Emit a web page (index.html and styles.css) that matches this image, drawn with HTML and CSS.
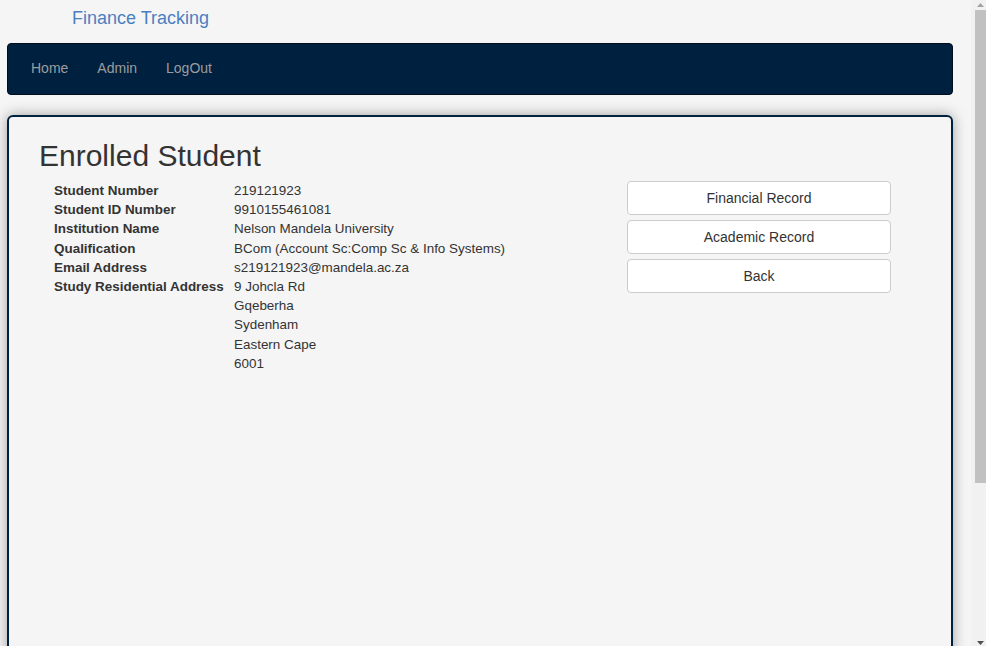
FILE: index.html
```html
<!DOCTYPE html>
<html>
<head>
<meta charset="utf-8">
<link rel="stylesheet" href="styles.css">
</head>
<body>
<div class="wrap">
  <div class="brand">Finance Tracking</div>
  <nav class="navbar">
    <a class="nav-link" href="#">Home</a>
    <a class="nav-link" href="#">Admin</a>
    <a class="nav-link" href="#">LogOut</a>
  </nav>
  <section class="card">
    <div class="main">
      <h1 class="title">Enrolled Student</h1>
      <div class="details">
        <div class="label">Student Number</div><div class="value">219121923</div>
        <div class="label">Student ID Number</div><div class="value">9910155461081</div>
        <div class="label">Institution Name</div><div class="value">Nelson Mandela University</div>
        <div class="label">Qualification</div><div class="value">BCom (Account Sc:Comp Sc &amp; Info Systems)</div>
        <div class="label">Email Address</div><div class="value">s219121923@mandela.ac.za</div>
        <div class="label">Study Residential Address</div>
        <div class="value">9 Johcla Rd<br>Gqeberha<br>Sydenham<br>Eastern Cape<br>6001</div>
      </div>
    </div>
    <div class="actions">
      <button class="btn">Financial Record</button>
      <button class="btn">Academic Record</button>
      <button class="btn">Back</button>
    </div>
  </section>
</div>
<div class="scrollbar" aria-hidden="true">
  <div class="sb-btn">
    <svg width="7" height="4" viewBox="0 0 7 4"><polygon points="3.5,0 7,4 0,4" fill="#a3a3a3"/></svg>
  </div>
  <div class="sb-track"><div class="sb-thumb"></div></div>
  <div class="sb-btn sb-down">
    <svg width="7" height="4" viewBox="0 0 7 4"><polygon points="0,0 7,0 3.5,4" fill="#505050"/></svg>
  </div>
</div>
</body>
</html>
```
FILE: styles.css
```css
html, body {
  margin: 0;
  padding: 0;
  background: #f5f5f5;
  font-family: "Liberation Sans", Arial, sans-serif;
  color: #333;
}
.wrap {
  width: 946px;
  margin-left: 7px;
  padding-bottom: 20px;
}
.brand {
  color: #4b7fc0;
  font-size: 18px;
  line-height: 20px;
  padding: 8px 0 0 65px;
  height: 43px;
  box-sizing: border-box;
}
.navbar {
  height: 52px;
  box-sizing: border-box;
  background: #002040;
  border: 1px solid #000d1c;
  border-radius: 4px;
  display: flex;
  align-items: center;
  padding-left: 23px;
  gap: 29px;
}
.nav-link {
  color: #9d9d9d;
  text-decoration: none;
  font-size: 14px;
  line-height: 20px;
  padding-bottom: 2px;
}
.card {
  box-sizing: border-box;
  margin-top: 20px;
  height: 720px;
  border: 2px solid #002040;
  border-radius: 6px;
  background: #f5f5f5;
  box-shadow: 0 0 14px rgba(0, 0, 0, 0.35);
  display: flex;
  align-items: flex-start;
  padding: 22px 60px 20px 30px;
}
.main {
  flex: 1;
}
.title {
  margin: 0 0 9px 0;
  font-size: 30px;
  line-height: 33px;
  font-weight: normal;
  color: #333;
}
.details {
  display: grid;
  grid-template-columns: 180px auto;
  margin-left: 15px;
  font-size: 13.44px;
  line-height: 19.2px;
  color: #333;
}
.label {
  font-weight: bold;
  white-space: nowrap;
}
.actions {
  width: 264px;
  margin-top: 42px;
  display: flex;
  flex-direction: column;
  gap: 5px;
}
.btn {
  height: 34px;
  background: #fff;
  border: 1px solid #ccc;
  border-radius: 4px;
  font-family: "Liberation Sans", Arial, sans-serif;
  font-size: 14px;
  color: #333;
  padding: 6px 12px;
  line-height: 20px;
}
.scrollbar {
  position: fixed;
  top: 0;
  right: 0;
  width: 15px;
  height: 100vh;
  background: #f1f1f1;
  display: flex;
  flex-direction: column;
}
.sb-btn {
  height: 10px;
  display: flex;
  align-items: center;
  justify-content: center;
  padding-left: 4px;
}
.sb-btn svg {
  display: block;
}
.sb-down {
  align-items: flex-end;
  padding-bottom: 1px;
}
.sb-track {
  flex: 1;
  padding-left: 4px;
}
.sb-thumb {
  height: 473px;
  background: #c1c1c1;
}
```
